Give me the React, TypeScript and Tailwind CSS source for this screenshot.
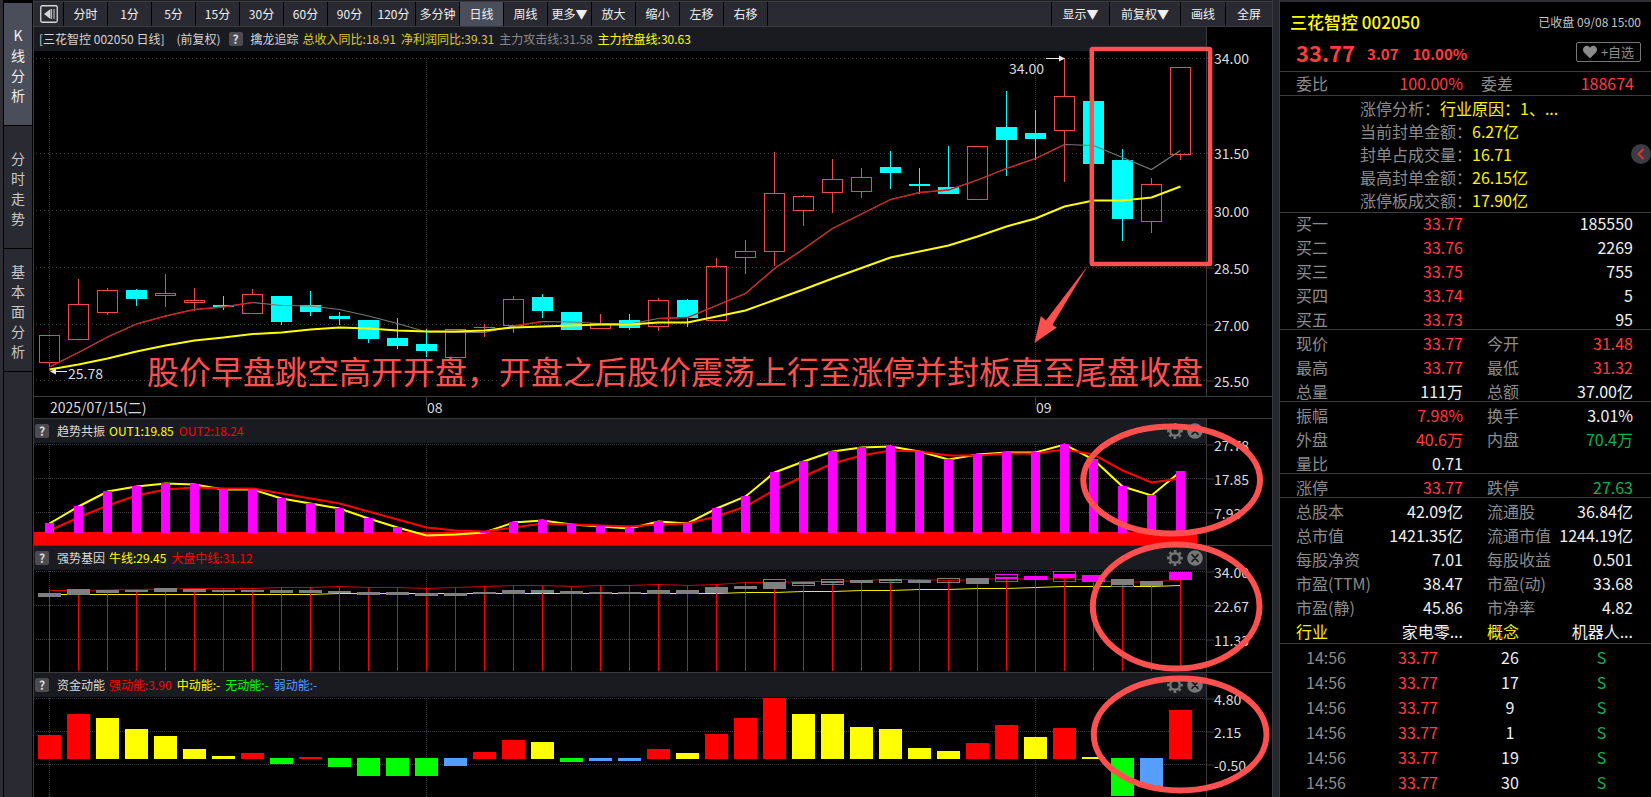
import React from "react";
import { FaHeart } from "react-icons/fa";

/* ---------- chart geometry (chart space, one unit per candle pixel) ---------- */
const LEFT = 34;
const PLOT_W = 1172;
const STEP = 29;
const FIRST = 49;
const cx = (i: number) => FIRST + STEP * i;
const MONTHS = [0, 13, 34];

type Candle = [string, number, number, number, number];

/* kind, high, body top, body bottom, low */
const CANDLES: Candle[] = [
  ["u", 335, 335, 362, 367], ["u", 279, 304, 339, 339], ["u", 288, 290, 312, 315], ["d", 289, 290, 299, 306],
  ["u", 274, 293, 295, 307], ["u", 288, 300, 302, 311], ["d", 296, 305, 307, 310], ["u", 289, 294, 313, 313],
  ["d", 296, 296, 322, 325], ["d", 291, 305, 312, 316], ["d", 312, 316, 319, 325], ["d", 320, 320, 339, 343],
  ["d", 318, 338, 346, 349], ["d", 329, 344, 351, 357], ["u", 329, 329, 357, 357], ["u", 324, 327, 327, 337],
  ["u", 296, 299, 325, 333], ["d", 294, 297, 311, 318], ["d", 312, 312, 330, 330], ["u", 314, 323, 328, 328],
  ["d", 314, 320, 328, 330], ["u", 298, 300, 326, 331], ["d", 299, 300, 318, 327], ["u", 258, 266, 320, 320],
  ["u", 240, 251, 257, 274], ["u", 152, 193, 251, 266], ["u", 195, 196, 210, 226], ["u", 159, 179, 192, 213],
  ["u", 168, 177, 191, 198], ["d", 151, 167, 173, 189], ["d", 168, 184, 186, 194], ["d", 146, 187, 194, 194],
  ["u", 146, 146, 199, 199], ["d", 91, 127, 140, 176], ["d", 110, 133, 139, 160], ["u", 58, 96, 130, 182],
  ["d", 101, 101, 164, 164], ["d", 149, 160, 219, 241], ["u", 178, 184, 221, 233], ["u", 67, 67, 154, 160],
];

const ATTACK = [
  367, 352.5, 337, 324, 316, 309.5, 307, 302.5, 305.5, 306, 309.5, 316, 323.5, 332, 332.5, 332.5, 326, 321.5, 322,
  323.5, 324, 318.5, 317.5, 305.5, 293.5, 268.5, 249, 228.5, 214, 199.5, 192.5, 190, 180, 168.5, 158.5, 144.5, 145.5,
  157.5, 169.5, 150.5,
];
const ATTACK_RED: [number, number][] = [[0, 7], [16, 17], [21, 35]];

const CONTROL = [
  369.5, 364.5, 358.5, 351.5, 345.5, 340.5, 337.5, 334, 332.5, 329.5, 327.5, 328.5, 330.5, 331.5, 331.5, 330.5, 327.5,
  326.5, 325.5, 324.5, 324.5, 322.5, 322.5, 316.5, 310.5, 300, 289.5, 278.5, 268, 257.5, 251.5, 245.5, 236.5, 226.5,
  218.5, 206.5, 200.5, 200.5, 197.5, 186.5,
];

const TREND_TOP = [
  523, 506, 491, 486, 483, 484, 489, 489, 498, 503, 508, 518, 527, 535, 534, 532, 522, 520, 524, 526, 528, 521, 523,
  508, 496, 472, 461, 451, 447, 446, 451, 459, 454, 452, 452, 444, 459, 486, 495, 471,
];
const TREND_RED = [
  530.5, 517.5, 505.5, 495.5, 489.5, 487.5, 488.5, 488.5, 493.5, 498.5, 503.5, 511.5, 519.5, 527.5, 530.5, 531.5,
  527.5, 523.5, 524.5, 525.5, 526.5, 524.5, 523.5, 516.5, 506.5, 490, 476.5, 463.5, 455.5, 450.5, 451.5, 455.5, 455.5,
  453.5, 453.5, 449.5, 454.5, 470.5, 482.5, 478.5,
];

/* outline top, outline bottom, fill top, fill bottom */
const GENE: [number, number, number, number][] = [
  [593, 597, 593, 597], [589, 595, 590, 595], [590, 593, 590, 593], [590, 592, 590, 592], [588, 592, 588, 591],
  [589, 592, 589, 592], [590, 592, 590, 592], [590, 592, 590, 592], [590, 593, 590, 593], [590, 593, 590, 593],
  [591, 593, 591, 593], [592, 595, 592, 595], [592, 595, 592, 595], [593, 596, 593, 596], [593, 596, 593, 596],
  [592, 594, 592, 594], [590, 594, 590, 594], [590, 593, 590, 593], [591, 594, 591, 594], [592, 594, 592, 594],
  [592, 594, 592, 594], [590, 594, 590, 594], [590, 594, 590, 594], [587, 593, 587, 593], [586, 589, 586, 589],
  [579, 589, 582, 589], [582, 586, 582, 584], [579, 585, 581, 583], [580, 583, 580, 583], [579, 583, 579, 581],
  [580, 583, 580, 583], [578, 583, 578, 579], [578, 584, 578, 584], [574, 582, 577, 579], [576, 580, 576, 580],
  [571, 582, 574, 578], [575, 582, 575, 582], [579, 587, 579, 585], [581, 586, 581, 586], [572, 580, 572, 580],
];
const GENE_HOT = [33, 34, 35, 36, 39];
const GENE_RED = [
  590.5, 590.5, 590, 589.5, 589, 588.5, 588.5, 588.5, 587.5, 587.5, 586.5, 587.5, 587.5, 588.5, 587.5, 586.5, 585.5,
  585.5, 586.5, 585.5, 585.5, 584.5, 585.5, 584.5, 582.5, 582.5, 581.5, 581.5, 580.5, 579.5, 579.5, 580.5, 579.5,
  578.5, 579.5, 578.5, 580.5, 582.5, 581.5, 580.5,
];
const GENE_YELLOW = [
  594.5, 594.5, 594.5, 594.5, 594.5, 594.5, 594.5, 594.5, 594.5, 594.5, 593.5, 593.5, 593.5, 593.5, 593.5, 593.5,
  593.5, 593.5, 593.5, 593.5, 593.5, 593.5, 593.5, 593.5, 592.5, 592.5, 591.5, 591.5, 590.5, 590.5, 589.5, 589.5,
  588.5, 588.5, 587.5, 586.5, 586.5, 586.5, 586.5, 585.5,
];

const RED = "#ff0000";
const YEL = "#ffff00";
const GRN = "#00ff00";
const BLU = "#559eff";
const ENERGY: [string, number][] = [
  [RED, 735], [RED, 714], [YEL, 718], [YEL, 729], [YEL, 736], [YEL, 749], [YEL, 756], [RED, 753], [GRN, 764],
  [RED, 757], [GRN, 767], [GRN, 776], [GRN, 776], [GRN, 776], [BLU, 766], [RED, 752], [RED, 740], [YEL, 742],
  [GRN, 762], [BLU, 761], [BLU, 761], [RED, 749], [YEL, 753], [RED, 734], [RED, 718], [RED, 698], [YEL, 714],
  [YEL, 714], [YEL, 727], [YEL, 729], [YEL, 748], [YEL, 751], [RED, 743], [RED, 725], [YEL, 737], [RED, 728],
  [YEL, 757], [GRN, 796], [BLU, 787], [RED, 710],
];

const path = (ys: number[], from = 0, to = ys.length - 1) =>
  ys.slice(from, to + 1).map((y, k) => `${cx(from + k) + 0.5},${y}`).join(" ");

/* ---------- small pieces ---------- */
function Grid({ rows, top, bottom, dash }: { rows: number[]; top: number; bottom: number; dash: string }) {
  return (
    <g stroke="#3e3e42" strokeWidth="1" shapeRendering="crispEdges">
      {rows.map((y) => (
        <line key={y} x1={LEFT + 2} x2={LEFT + PLOT_W} y1={y + 0.5} y2={y + 0.5} strokeDasharray={dash} />
      ))}
      {MONTHS.map((i) => (
        <line key={i} x1={cx(i) + 0.5} x2={cx(i) + 0.5} y1={top} y2={bottom} strokeDasharray="1 1" stroke="#3a3a3e" />
      ))}
    </g>
  );
}

function Plot({ top, height, label, children }: { top: number; height: number; label: string; children: React.ReactNode }) {
  return (
    <svg
      role="img"
      aria-label={label}
      className="block h-full w-full"
      viewBox={`${LEFT} ${top} ${PLOT_W} ${height}`}
      preserveAspectRatio="none"
    >
      {children}
    </svg>
  );
}

function Axis({ top, height, marks }: { top: number; height: number; marks: [number, string][] }) {
  return (
    <div className="relative w-[66px] shrink-0 border-l border-[#3a3a3f] text-sm leading-4 text-[#dcdcdc]">
      {marks.map(([y, t]) => (
        <div
          key={t}
          className="absolute left-0 flex -translate-y-1/2 items-center"
          style={{ top: `${((y + 0.5 - top) / height) * 100}%` }}
        >
          <span className="h-px w-[7px] bg-[#3a3a3f]" />
          <span className="pb-px">{t}</span>
        </div>
      ))}
    </div>
  );
}

function Help() {
  return (
    <button
      aria-label="说明"
      className="flex h-3.5 w-3.5 shrink-0 items-center justify-center rounded-xs bg-[#4b4b50] text-xs leading-none font-bold text-[#dddddd]"
    >
      ?
    </button>
  );
}

function Gear() {
  return (
    <button aria-label="设置" className="h-4 w-4">
      <svg viewBox="0 0 16 16" className="h-4 w-4" fill="none" stroke="#77777a">
        <circle cx="8" cy="8" r="4.8" strokeWidth="2.4" />
        <circle cx="8" cy="8" r="6.8" strokeWidth="2.2" strokeDasharray="2.8 2.54" strokeDashoffset="1.4" />
      </svg>
    </button>
  );
}

function Close() {
  return (
    <button aria-label="关闭" className="h-4 w-4">
      <svg viewBox="0 0 16 16" className="h-4 w-4">
        <circle cx="8" cy="8" r="7.8" fill="#77777a" />
        <path d="M5 4.6 11 11.4M11 4.6 5 11.4" stroke="#1a1b20" strokeWidth="1.6" strokeLinecap="round" />
      </svg>
    </button>
  );
}

function SubPanel(props: {
  title: string;
  values: [string, string][];
  top: number;
  height: number;
  marks: [number, string][];
  size: string;
  children: React.ReactNode;
}) {
  const { title, values, top, height, marks, size, children } = props;
  return (
    <section className={`flex shrink-0 border-t border-[#3a3a3f] ${size}`}>
      <div className="flex min-w-0 flex-1 flex-col">
        <header className="flex h-6 shrink-0 items-center bg-[#1a1b20] pr-[3px] pl-px text-xs">
          <Help />
          <h2 className="ml-2 pb-px text-[#dcdcdc]">{title}</h2>
          <div className="ml-1 flex flex-1 gap-[5px] pb-px">
            {values.map(([t, c]) => (
              <span key={t} className={c}>{t}</span>
            ))}
          </div>
          <div className="flex gap-1">
            <Gear />
            <Close />
          </div>
        </header>
        <div className="min-h-0 flex-1">
          <Plot top={top + 24} height={height - 24} label={title}>
            <Grid rows={marks.map((m) => m[0])} top={top + 25} bottom={top + height} dash="1 1" />
            {children}
          </Plot>
        </div>
      </div>
      <Axis top={top} height={height} marks={marks} />
    </section>
  );
}

/* ---------- left rail and toolbar ---------- */
function Rail() {
  const tabs: [string, string][] = [
    ["K线分析", "bg-[#4a4e5a] text-[#f0f0f0]"],
    ["分时走势", "bg-[#2a2a33] text-[#c8c8c8]"],
    ["基本面分析", "bg-[#2a2a33] text-[#c8c8c8]"],
  ];
  return (
    <nav className="flex w-[33px] shrink-0 flex-col border-l-[3px] border-[#2e2e34] bg-black pt-[3px] pr-px pl-px">
      {tabs.map(([t, c]) => (
        <button key={t} className={`mb-px flex h-[122px] flex-col items-center justify-center pt-0.5 text-sm leading-5 ${c}`}>
          {[...t].map((ch, i) => (
            <span key={i}>{ch}</span>
          ))}
        </button>
      ))}
      <div className="flex-1 bg-[#2a2a33]" />
    </nav>
  );
}

const PERIODS = ["分时", "1分", "5分", "15分", "30分", "60分", "90分", "120分", "多分钟", "日线", "周线", "更多▼", "放大", "缩小", "左移", "右移"];

function Toolbar() {
  return (
    <div className="flex h-6 shrink-0 bg-[#2a2a33] text-xs text-[#f0f0f0]">
      <div className="flex w-[30px] items-center justify-center border-r border-black">
        <button aria-label="返回" className="h-[18px] w-[18px]">
          <svg viewBox="0 0 18 18" className="h-[18px] w-[18px]">
            <rect x="0.75" y="0.75" width="16.5" height="16.5" rx="1.5" fill="none" stroke="#d8d8d8" strokeWidth="1.3" />
            <path d="M10.5 4v10L4 9z" fill="#d8d8d8" />
            <path d="M11.5 4v10M14 4v10" stroke="#b8b8b8" strokeWidth="1.2" />
          </svg>
        </button>
      </div>
      {PERIODS.map((p) => (
        <button
          key={p}
          className={`w-11 border-r border-black pb-px whitespace-nowrap ${p === "日线" ? "bg-[#4a4e5a]" : "bg-[#2a2a33]"}`}
        >
          {p}
        </button>
      ))}
      <div className="flex-1 border-r border-black" />
      <button className="w-[58px] border-r border-black pb-px">显示▼</button>
      <button className="w-[71px] border-r border-black pb-px">前复权▼</button>
      <button className="w-[45px] border-r border-black pb-px">画线</button>
      <button className="w-[46px] pb-px">全屏</button>
    </div>
  );
}

/* ---------- main chart ---------- */
const pctX = (x: number) => `${((x - LEFT) / PLOT_W) * 100}%`;
const pctY = (y: number) => `${((y - 51) / 345) * 100}%`;

function MainChart() {
  return (
    <section className="flex min-h-[370px] flex-1 border-t border-[#3a3a3f]">
      <div className="flex min-w-0 flex-1 flex-col">
        <header className="flex h-6 shrink-0 items-center bg-[#1a1b20] pb-px pl-[5px] text-xs text-[#d4d4d4]">
          <h1 className="whitespace-nowrap">[三花智控 002050 日线]</h1>
          <span className="mr-2 ml-3">(前复权)</span>
          <Help />
          <span className="ml-2">擒龙追踪</span>
          <div className="ml-1 flex gap-[5px]">
            <span className="text-[#dccb20]">总收入同比:18.91</span>
            <span className="text-[#dccb20]">净利润同比:39.31</span>
            <span className="text-[#8a8a8a]">主力攻击线:31.58</span>
            <span className="text-[#ffff00]">主力控盘线:30.63</span>
          </div>
        </header>
        <div className="relative min-h-0 flex-1">
          <Plot top={51} height={345} label="K线图">
            <Grid rows={[58, 153, 210, 267, 324, 380]} top={58} bottom={380} dash="1 3" />
            {CANDLES.map(([k, hi, t, b, lo], i) => {
              const x = cx(i);
              return k === "u" ? (
                <g key={i} fill="none" stroke="#f04848" strokeWidth="1" shapeRendering="crispEdges">
                  <line x1={x + 0.5} x2={x + 0.5} y1={hi} y2={t} />
                  <line x1={x + 0.5} x2={x + 0.5} y1={b} y2={lo} />
                  {b > t ? (
                    <rect x={x - 9.5} y={t + 0.5} width="20" height={b - t} />
                  ) : (
                    <line x1={x - 10} x2={x + 11} y1={t + 0.5} y2={t + 0.5} />
                  )}
                </g>
              ) : (
                <g key={i} fill="#00ffff" shapeRendering="crispEdges">
                  <rect x={x} y={hi} width="1" height={lo - hi} />
                  <rect x={x - 10} y={t} width="21" height={b - t} />
                </g>
              );
            })}
            <polyline points={path(ATTACK)} fill="none" stroke="#777777" strokeWidth="1.2" />
            {ATTACK_RED.map(([a, b]) => (
              <polyline key={a} points={path(ATTACK, a, b)} fill="none" stroke="#d42020" strokeWidth="1.3" />
            ))}
            <polyline points={path(CONTROL)} fill="none" stroke="#ffff00" strokeWidth="2" />
            <path d="M1046 58.5h14M67 371.5H54" stroke="#e8e8e8" />
            <path d="M1065 58.5l-6-3v6zM50 371.5l6-3v6z" fill="#e8e8e8" />
          </Plot>
          <span
            className="absolute -translate-y-1/2 text-sm leading-4 text-[#dcdcdc]"
            style={{ left: pctX(1009), top: pctY(68) }}
          >
            34.00
          </span>
          <span
            className="absolute -translate-y-1/2 text-sm leading-4 text-[#dcdcdc]"
            style={{ left: pctX(68), top: pctY(373) }}
          >
            25.78
          </span>
          <p
            className="absolute -translate-y-1/2 text-[32px] leading-10 whitespace-nowrap text-[#ff5050]"
            style={{ left: pctX(147), top: pctY(370) }}
          >
            股价早盘跳空高开开盘，开盘之后股价震荡上行至涨停并封板直至尾盘收盘
          </p>
        </div>
      </div>
      <Axis
        top={27}
        height={369}
        marks={[[58, "34.00"], [153, "31.50"], [210, "30.00"], [267, "28.50"], [324, "27.00"], [380, "25.50"]]}
      />
    </section>
  );
}

function DateAxis() {
  const marks: [number, string][] = [[0, "2025/07/15(二)"], [13, "08"], [34, "09"]];
  return (
    <div className="flex h-[22px] shrink-0 border-t border-[#3a3a3f] text-sm leading-5 text-[#dcdcdc]">
      <div className="relative flex-1">
        {marks.map(([i, t]) => (
          <span key={t} className="absolute top-0 flex" style={{ left: pctX(cx(i)) }}>
            <span className={i ? "h-2 w-px bg-[#3a3a3f]" : "h-2 w-px"} />
            {t}
          </span>
        ))}
      </div>
      <div className="w-[66px]" />
    </div>
  );
}

function Marks() {
  return (
    <svg
      aria-hidden="true"
      className="pointer-events-none absolute inset-0 h-full w-full"
      viewBox="33 0 1240 797"
      preserveAspectRatio="none"
      fill="none"
      stroke="#ff5050"
    >
      <rect x="1092.5" y="49" width="118.5" height="215" rx="1" strokeWidth="4.5" />
      <path d="M1089 265 1046.5 320.5 1041.5 316 1035 343 1057.5 327.5 1053 325Z" fill="#ff5050" stroke="none" />
      <ellipse cx="1172.5" cy="480" rx="88.5" ry="53.5" strokeWidth="6" />
      <ellipse cx="1177" cy="606.5" rx="83.5" ry="62" strokeWidth="6" />
      <ellipse cx="1181" cy="734.5" rx="86.5" ry="56" strokeWidth="6" />
    </svg>
  );
}

/* ---------- quote panel ---------- */
const R = "text-[#ff3c3c]";
const W = "text-[#f0f0f0]";
const G = "text-[#12b052]";
const Y = "text-[#fff000]";
const L = "text-[#8c8c8c]";

type Pair = [string, string, string, string, string, string, string?];

const GROUPS: Pair[][] = [
  [
    ["现价", "33.77", R, "今开", "31.48", R],
    ["最高", "33.77", R, "最低", "31.32", R],
    ["总量", "111万", W, "总额", "37.00亿", W],
  ],
  [
    ["振幅", "7.98%", R, "换手", "3.01%", W],
    ["外盘", "40.6万", R, "内盘", "70.4万", G],
    ["量比", "0.71", W, "", "", W],
  ],
  [["涨停", "33.77", R, "跌停", "27.63", G]],
  [
    ["总股本", "42.09亿", W, "流通股", "36.84亿", W],
    ["总市值", "1421.35亿", W, "流通市值", "1244.19亿", W],
    ["每股净资", "7.01", W, "每股收益", "0.501", W],
    ["市盈(TTM)", "38.47", W, "市盈(动)", "33.68", W],
    ["市盈(静)", "45.86", W, "市净率", "4.82", W],
    ["行业", "家电零...", W, "概念", "机器人...", W, "y"],
  ],
];

const BUYS = [["买一", "33.77", "185550"], ["买二", "33.76", "2269"], ["买三", "33.75", "755"], ["买四", "33.74", "5"], ["买五", "33.73", "95"]];

const NOTES = [["涨停分析：", "行业原因：1、..."], ["当前封单金额：", "6.27亿"], ["封单占成交量：", "16.71"], ["最高封单金额：", "26.15亿"], ["涨停板成交额：", "17.90亿"]];

const TICKS = ["26", "17", "9", "1", "19", "30"];

function Quote() {
  return (
    <aside className="relative w-[372px] shrink-0 border-l border-[#3a3a3f] bg-black text-base leading-[18px]">
      <div className="border-t-2 border-[#2e2e34]">
        <div className="flex h-10 items-center justify-between pr-2.5 pl-2.5">
          <h2 className="text-[17px] font-medium text-[#ffff00]">三花智控 002050</h2>
          <span className="text-xs text-[#c4c4c4]">已收盘 09/08 15:00</span>
        </div>
        <div className="flex h-[29px] items-start pr-2.5 pl-4">
          <div className={`flex h-6 flex-1 items-center pb-1 font-bold ${R}`}>
            <span className="text-[22px]">33.77</span>
            <span className="ml-3 pt-1 text-[15px]">3.07</span>
            <span className="ml-3.5 pt-1 text-[15px]">10.00%</span>
          </div>
          <button className="flex h-5 w-[65px] items-center justify-center gap-1 rounded-xs border border-[#77777a] text-sm leading-4 whitespace-nowrap text-[#8c8c8c]">
            <FaHeart />
            <span className="text-[13px]">+自选</span>
          </button>
        </div>
      </div>

      <div className="flex h-[25px] items-center border-y border-[#3a3a3f] pb-0.5">
        <span className={`w-[50px] pl-4 ${L}`}>委比</span>
        <span className={`w-[133px] text-right ${R}`}>100.00%</span>
        <span className={`flex-1 pl-[18px] ${L}`}>委差</span>
        <span className={`pr-[17px] ${R}`}>188674</span>
      </div>

      <dl className="h-[116px] pl-20">
        {NOTES.map(([k, v]) => (
          <div key={k} className="flex h-[23px] items-center">
            <dt className={L}>{k}</dt>
            <dd className={Y}>{v}</dd>
          </div>
        ))}
      </dl>

      <table className="w-full table-fixed border-separate border-spacing-0">
        <tbody>
          {BUYS.map(([k, p, n], i) => {
            const c = `p-0 align-top ${i ? "pt-0.5" : "border-t border-[#3a3a3f] pt-px"} ${i < 4 ? "h-6" : "h-[21px]"}`;
            return (
              <tr key={k}>
                <th className={`w-[60px] pl-4 text-left font-normal ${c} ${L}`}>{k}</th>
                <td className={`w-[123px] text-right ${c} ${R}`}>{p}</td>
                <td className={`text-right ${c} ${W}`}>
                  <span className="pr-[18px]">{n}</span>
                </td>
              </tr>
            );
          })}
        </tbody>
      </table>

      <table className="w-full table-fixed border-separate border-spacing-0">
        <colgroup>
          <col className="w-[98px]" />
          <col className="w-[85px]" />
          <col className="w-[90px]" />
          <col />
        </colgroup>
        <tbody>
          {GROUPS.map((g) =>
            g.map(([a, b, bc, c, d, dc, hot], i) => {
              const cell = `h-6 px-0 pt-0 pb-px align-bottom whitespace-nowrap ${i ? "" : "border-t border-[#3a3a3f]"}`;
              const lab = hot ? Y : L;
              return (
                <tr key={a}>
                  <th className={`text-left font-normal ${cell} ${lab}`}><span className="pl-4">{a}</span></th>
                  <td className={`text-right ${cell} ${bc}`}><span className="-ml-4">{b}</span></td>
                  <th className={`text-left font-normal ${cell} ${lab}`}><span className="pl-6">{c}</span></th>
                  <td className={`text-right ${cell} ${dc}`}><span className="-ml-4 pr-[18px]">{d}</span></td>
                </tr>
              );
            })
          )}
        </tbody>
      </table>

      <div className="mt-0.5 border-t border-[#3a3a3f]">
        <table className="w-full table-fixed border-separate border-spacing-0">
          <colgroup>
            <col className="w-[92px]" />
            <col className="w-[92px]" />
            <col className="w-[92px]" />
            <col />
          </colgroup>
          <tbody>
            {TICKS.map((n) => (
              <tr key={n}>
                <td className={`h-[25px] p-0 text-center ${L}`}>14:56</td>
                <td className={`h-[25px] p-0 text-center ${R}`}>33.77</td>
                <td className={`h-[25px] p-0 text-center ${W}`}>{n}</td>
                <td className={`h-[25px] p-0 text-center ${G}`}><span className="pr-1">S</span></td>
              </tr>
            ))}
          </tbody>
        </table>
      </div>

      <button
        aria-label="收起"
        className="absolute top-36 right-0 flex h-5 w-5 items-center justify-center rounded-full bg-[#3c3c44]"
      >
        <svg viewBox="0 0 20 20" className="h-5 w-5" fill="none" stroke="#e03030" strokeWidth="2">
          <path d="M12.5 5 7.5 10l5 5" />
        </svg>
      </button>
    </aside>
  );
}

export default function App() {
  return (
    <div className="flex min-h-screen min-w-[1400px] overflow-hidden bg-[#26262e] font-['Noto_Sans_CJK_SC',sans-serif]">
      <Rail />
      <main className="relative flex min-w-0 flex-1 flex-col border-x border-[#3a3a3f] bg-black">
        <div className="h-0.5 shrink-0 border-b border-[#3a3a3f] bg-[#1e1e24]" />
        <Toolbar />
        <MainChart />
        <DateAxis />

        <SubPanel
          title="趋势共振"
          values={[["OUT1:19.85", "text-[#ffff00]"], ["OUT2:18.24", "text-[#ff0000]"]]}
          top={419}
          height={126}
          size="h-[127px]"
          marks={[[444, "27.78"], [478, "17.85"], [512, "7.93"]]}
        >
          <rect x={LEFT} y="532" width="1163" height="13" fill="#ff0000" />
          <polyline points={path(TREND_TOP.map((y) => y + 0.5))} fill="none" stroke="#ffff00" strokeWidth="2" />
          <polyline points={path(TREND_RED)} fill="none" stroke="#ff0000" strokeWidth="2" />
          {TREND_TOP.map((y, i) =>
            y < 533 ? <rect key={i} x={cx(i) - 4} y={y} width="9" height={533 - y} fill="#ff00ff" /> : null
          )}
        </SubPanel>

        <SubPanel
          title="强势基因"
          values={[["牛线:29.45", "text-[#ffff00]"], ["大盘中线:31.12", "text-[#ff0000]"]]}
          top={546}
          height={126}
          size="h-[127px]"
          marks={[[571, "34.00"], [605, "22.67"], [639, "11.33"]]}
        >
          <polyline points={path(GENE_RED)} fill="none" stroke="#d00000" strokeWidth="1" />
          <polyline points={path(GENE_YELLOW)} fill="none" stroke="#f0f000" strokeWidth="1" />
          <g shapeRendering="crispEdges">
            {GENE_RED.map((y, i) => (
              <rect key={i} x={cx(i)} y={Math.floor(y)} width="1" height={671 - Math.floor(y)} fill="#ff0000" />
            ))}
            {GENE.map(([ot, ob, ft, fb], i) => {
              const c = GENE_HOT.includes(i) ? "#ff00ff" : "#808080";
              return (
                <g key={i}>
                  <rect x={cx(i) - 10.5} y={ot + 0.5} width="22" height={ob - ot - 1} fill="none" stroke={c} />
                  <rect x={cx(i) - 11} y={ft} width="23" height={fb - ft} fill={c} />
                </g>
              );
            })}
          </g>
        </SubPanel>

        <SubPanel
          title="资金动能"
          values={[
            ["强动能:3.90", "text-[#ff0000]"],
            ["中动能:-", "text-[#ffff00]"],
            ["无动能:-", "text-[#00ff00]"],
            ["弱动能:-", "text-[#559eff]"],
          ]}
          top={673}
          height={124}
          size="h-[125px]"
          marks={[[698, "4.80"], [731, "2.15"], [764, "-0.50"]]}
        >
          <g shapeRendering="crispEdges">
            {ENERGY.map(([c, y], i) =>
              y < 759 ? (
                <rect key={i} x={cx(i) - 11} y={y} width="23" height={759 - y} fill={c} />
              ) : (
                <rect key={i} x={cx(i) - 11} y="758" width="23" height={y - 758} fill={c} />
              )
            )}
          </g>
        </SubPanel>

        <Marks />
      </main>
      <div className="w-1.5 shrink-0 bg-[#26262e]" />
      <Quote />
    </div>
  );
}
